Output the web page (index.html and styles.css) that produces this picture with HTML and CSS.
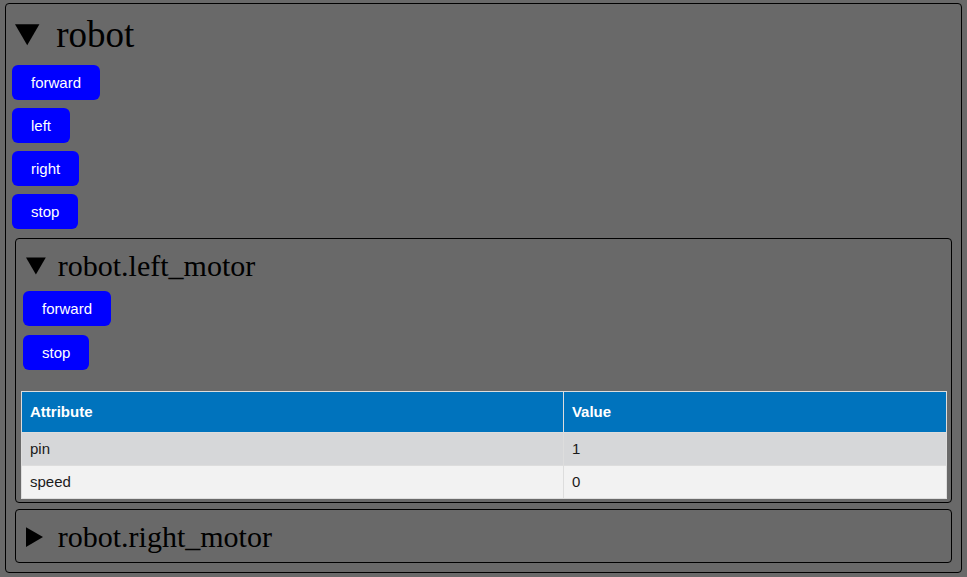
FILE: index.html
```html
<!DOCTYPE html>
<html lang="en">
<head>
<meta charset="utf-8">
<title>robot</title>
<link rel="stylesheet" href="styles.css">
</head>
<body>
<details class="node root" open>
  <summary class="title title-lg"><span class="label">robot</span></summary>
  <div class="actions">
    <button class="btn" type="button">forward</button>
    <button class="btn" type="button">left</button>
    <button class="btn" type="button">right</button>
    <button class="btn" type="button">stop</button>
  </div>
  <details class="node child" open>
    <summary class="title"><span class="label">robot.left_motor</span></summary>
    <div class="actions">
      <button class="btn" type="button">forward</button>
      <button class="btn" type="button">stop</button>
    </div>
    <table class="attrs">
      <thead>
        <tr><th>Attribute</th><th>Value</th></tr>
      </thead>
      <tbody>
        <tr class="odd"><td>pin</td><td>1</td></tr>
        <tr class="even"><td>speed</td><td>0</td></tr>
      </tbody>
    </table>
  </details>
  <details class="node child">
    <summary class="title"><span class="label">robot.right_motor</span></summary>
  </details>
</details>
</body>
</html>
```

FILE: styles.css
```css
html, body {
  margin: 0;
  background: #696969;
}

body {
  font-family: "Liberation Serif", "Times New Roman", serif;
  color: #000;
}

.node {
  border: 1px solid #000;
  border-radius: 4px;
}

.root {
  margin: 3px 5px;
  padding: 8px 6px 9px;
}

.title {
  cursor: pointer;
  font-size: 30px;
  line-height: 35px;
}

.title-lg {
  font-size: 37px;
  line-height: 42px;
  padding-top: 2px;
  padding-left: 3px;
}

.title-lg .label {
  margin-left: 2px;
}

.actions {
  display: flex;
  flex-direction: column;
  align-items: flex-start;
  gap: 8px;
}

.root > .actions {
  margin-top: 9px;
  margin-bottom: 9px;
}

.btn {
  display: block;
  background: #0000ff;
  color: #fff;
  border: 0;
  border-radius: 6px;
  padding: 9px 19px;
  font-family: "Liberation Sans", Arial, sans-serif;
  font-size: 15px;
  line-height: 17px;
  cursor: pointer;
}

.child {
  margin: 0 3px;
  padding: 9px 4px 3px 5px;
}

.child + .child {
  margin-top: 6px;
}

.child > .title {
  margin-left: 5px;
  margin-bottom: 5px;
}

.child > .actions {
  margin-top: 8px;
  margin-left: 2px;
  gap: 9px;
}

.attrs {
  width: 100%;
  margin-top: 21px;
  border-collapse: collapse;
  font-family: "Liberation Sans", Arial, sans-serif;
  font-size: 15px;
}

.attrs th {
  background: #0073bd;
  color: #fff;
  text-align: left;
  font-weight: bold;
  padding: 11px 8px 12px;
  line-height: 17px;
  border: 1px solid #dddddd;
}

.attrs td {
  padding: 8px;
  line-height: 16px;
  color: #1a1a1a;
  border: 1px solid #dddddd;
}

.attrs .odd td {
  background: #d6d7d9;
}

.attrs .even td {
  background: #f2f2f2;
}
```
